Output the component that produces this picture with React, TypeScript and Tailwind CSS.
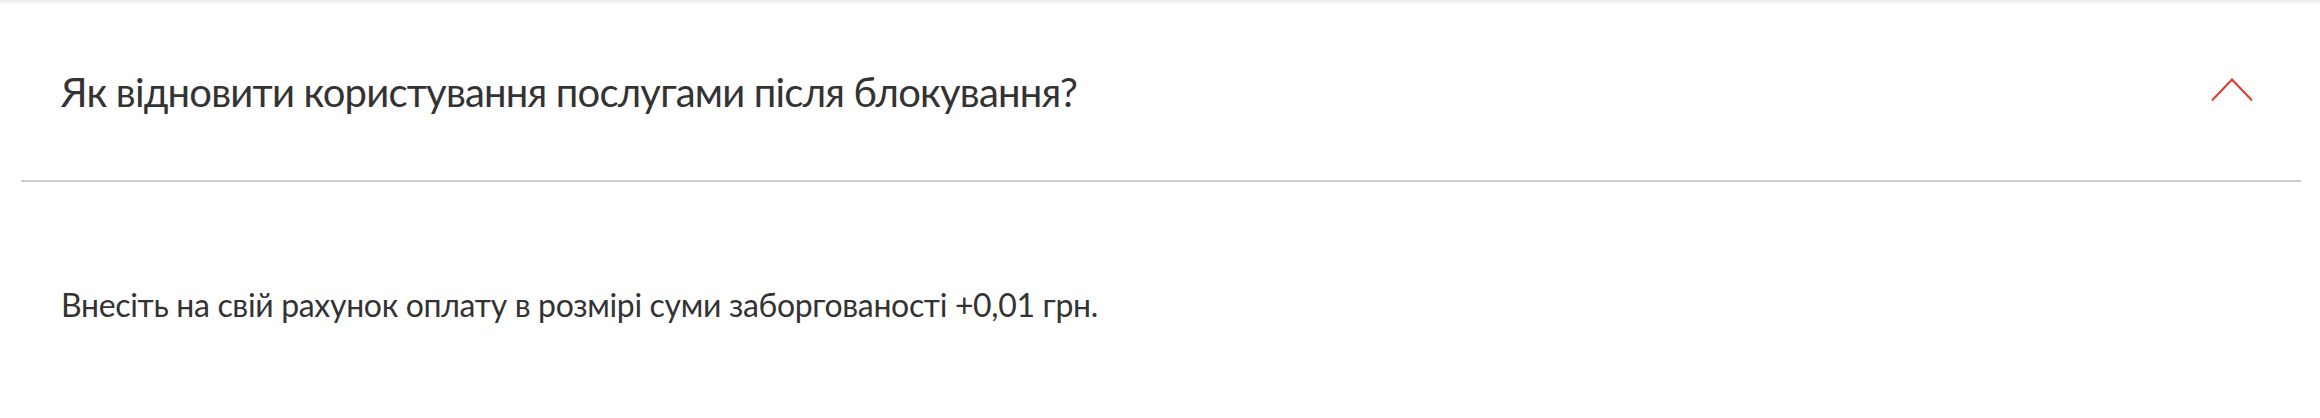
import React from "react";

export default function App() {
  return (
    <div className="w-full min-h-[418px] bg-white" style={{ fontFamily: '"Lato", "Noto Sans", sans-serif' }}>
      <div className="h-[4px] bg-gradient-to-b from-[#ebebeb] to-white" />
      <div className="pl-[21px] pr-[19px]">
        <div className="flex items-start justify-between h-[178px] border-b-2 border-[#cccccc] pl-10 pr-12">
          <h3 className="mt-[64px] text-[40px] leading-[48px] tracking-[-0.8px] font-normal text-[#333333]">
            Як відновити користування послугами після блокування?
          </h3>
          <svg className="mt-[74px] shrink-0" width="42" height="24" viewBox="0 0 42 24" fill="none">
            <path d="M1 22.5 L21 1.5 L41 22.5" stroke="#de3a2a" strokeWidth="2" />
          </svg>
        </div>
        <div className="pl-10 pr-12 pt-[104px]">
          <p className="text-[32px] leading-[38px] tracking-[-0.33px] text-[#333333]">
            Внесіть на свій рахунок оплату в розмірі суми заборгованості +0,01 грн.
          </p>
        </div>
      </div>
    </div>
  );
}
